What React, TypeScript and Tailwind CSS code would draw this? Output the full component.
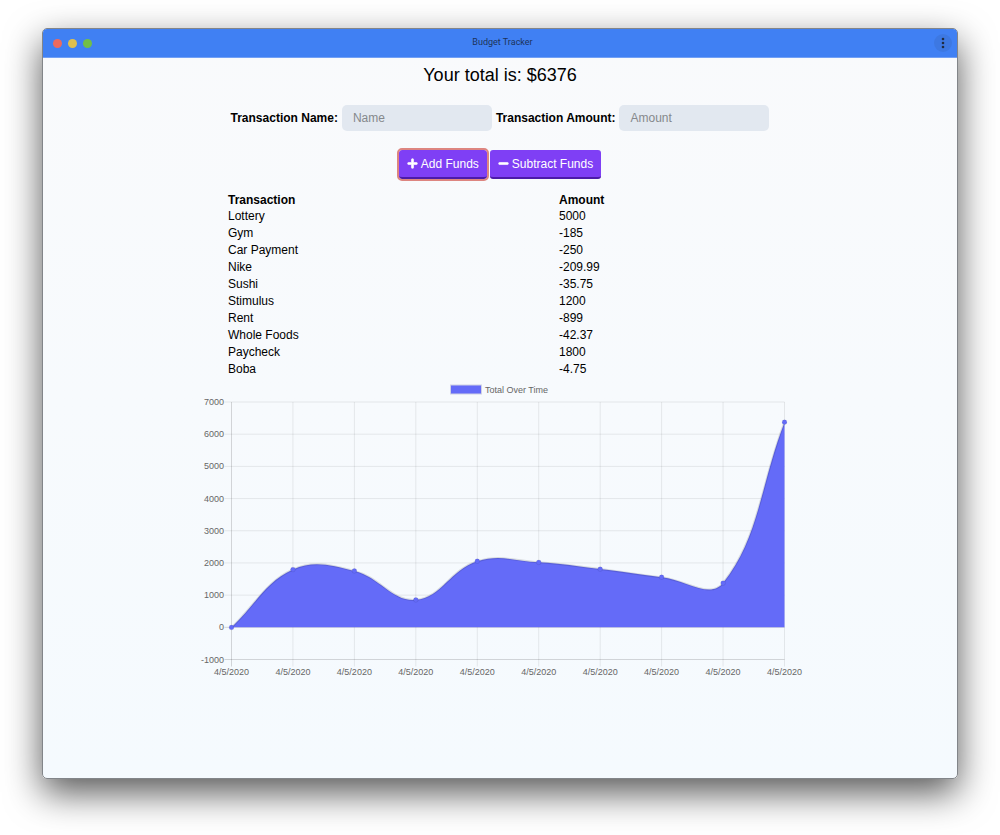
import React from "react";
import { FaPlus, FaMinus } from "react-icons/fa";

const transactions: [string, string][] = [
  ["Lottery", "5000"],
  ["Gym", "-185"],
  ["Car Payment", "-250"],
  ["Nike", "-209.99"],
  ["Sushi", "-35.75"],
  ["Stimulus", "1200"],
  ["Rent", "-899"],
  ["Whole Foods", "-42.37"],
  ["Paycheck", "1800"],
  ["Boba", "-4.75"],
];

const totals = [-4.75, 1795.25, 1752.88, 853.88, 2053.88, 2018.13, 1808.14, 1558.14, 1373.14, 6373.14];
const ticks = [7000, 6000, 5000, 4000, 3000, 2000, 1000, 0, -1000];

const LEFT = 35.5;
const RIGHT = 588.5;
const TOP = 20;
const BOTTOM = 277.5;
const xAt = (i: number) => LEFT + (i * (RIGHT - LEFT)) / (totals.length - 1);
const yAt = (v: number) => TOP + ((7000 - v) * (BOTTOM - TOP)) / 8000;

type Point = { x: number; y: number };

// Cubic spline through the points, with control handles scaled by distance.
function splinePath(points: Point[], tension = 0.4) {
  const dist = (a: Point, b: Point) => Math.hypot(b.x - a.x, b.y - a.y);
  const handles = points.map((p, i) => {
    const prev = points[i - 1] ?? p;
    const next = points[i + 1] ?? p;
    const before = dist(prev, p);
    const after = dist(p, next);
    const a = (tension * before) / (before + after);
    const b = (tension * after) / (before + after);
    return {
      inX: p.x - a * (next.x - prev.x),
      inY: p.y - a * (next.y - prev.y),
      outX: p.x + b * (next.x - prev.x),
      outY: p.y + b * (next.y - prev.y),
    };
  });
  return points
    .map((p, i) =>
      i === 0
        ? `M${p.x} ${p.y}`
        : `C${handles[i - 1].outX} ${handles[i - 1].outY} ${handles[i].inX} ${handles[i].inY} ${p.x} ${p.y}`
    )
    .join(" ");
}

function TotalChart() {
  const points = totals.map((v, i) => ({ x: xAt(i), y: yAt(v) }));
  const line = splinePath(points);
  return (
    <svg viewBox="0 0 608 304" className="block w-full text-[9px]" role="img" aria-label="Total Over Time">
      <rect x="254.5" y="3" width="31" height="9" fill="#646bf8" stroke="#d0d2e3" strokeWidth="1" />
      <text x="289" y="11" fill="#666">Total Over Time</text>
      {ticks.map((t) => (
        <g key={t}>
          <line x1={LEFT - 7} x2={RIGHT} y1={yAt(t)} y2={yAt(t)} stroke="#000" strokeOpacity={t === 0 || t === -1000 ? 0.15 : 0.08} />
          <text x="28" y={yAt(t) + 3} textAnchor="end" fill="#666">{t}</text>
        </g>
      ))}
      {points.map((p, i) => (
        <g key={i}>
          <line x1={p.x} x2={p.x} y1={TOP} y2={BOTTOM + 7} stroke="#000" strokeOpacity={i === 0 ? 0.15 : 0.08} />
          <text x={p.x} y="293" textAnchor="middle" fill="#666">4/5/2020</text>
        </g>
      ))}
      <path d={`${line} L${RIGHT} ${yAt(0)} L${LEFT} ${yAt(0)} Z`} fill="#646bf8" />
      <path d={line} fill="none" stroke="#000" strokeOpacity="0.12" strokeWidth="2" />
      {points.map((p, i) => (
        <circle key={i} cx={p.x} cy={p.y} r="2.4" fill="#646bf8" stroke="#000" strokeOpacity="0.1" strokeWidth="0.7" />
      ))}
    </svg>
  );
}

const field = "h-[26px] w-[150px] rounded-[5px] bg-[#e2e8f0] px-[11px] text-[12px] text-black outline-none placeholder:text-[#85888c]";
const button =
  "flex h-[29px] items-center gap-[3px] rounded-[3px] border-b-2 border-[#4c1ba8] bg-[#7f3ff5] px-2 text-[12px] text-white";

export default function App() {
  return (
    <div className="flex min-h-screen bg-white px-[42px] pt-7 pb-14 font-['Liberation_Sans',Arial,sans-serif] text-black">
      <div className="flex flex-1 flex-col overflow-hidden rounded-[5px] border border-[#828589] bg-linear-to-b from-[#f9fafc] to-[#f5fafe] shadow-[0_14px_36px_rgba(0,0,0,0.66)]">
        <header className="grid h-[29px] grid-cols-[1fr_auto_1fr] items-center border-b border-[#72a0f5] bg-[#4080f3] pr-[5px] pl-[10px]">
          <div className="flex gap-[6px]">
            <span className="size-[9px] rounded-full bg-[#ed6a5e]" />
            <span className="size-[9px] rounded-full bg-[#e0bf4d]" />
            <span className="size-[9px] rounded-full bg-[#72bf47]" />
          </div>
          <span className="font-[Roboto,sans-serif] text-[9px] text-[#1d3359]">Budget Tracker</span>
          <button aria-label="More" className="flex size-[18px] items-center justify-center justify-self-end rounded-full bg-[#3d78e2]">
            <svg viewBox="0 0 12 12" className="size-3" fill="#202c42">
              <circle cx="6" cy="2" r="1.3" />
              <circle cx="6" cy="6" r="1.3" />
              <circle cx="6" cy="10" r="1.3" />
            </svg>
          </button>
        </header>

        <main className="mx-auto flex w-full max-w-[608px] flex-col">
          <h1 className="pt-[5px] text-center text-[18px] leading-6">Your total is: $6376</h1>

          <form onSubmit={(e) => e.preventDefault()}>
            <div className="mt-[18px] flex flex-wrap items-center justify-center gap-1 text-[12px]">
              <label htmlFor="t-name" className="font-bold">Transaction Name:</label>
              <input id="t-name" type="text" placeholder="Name" className={field} />
              <label htmlFor="t-amount" className="font-bold">Transaction Amount:</label>
              <input id="t-amount" type="text" placeholder="Amount" className={field} />
            </div>
            <div className="mt-[19px] flex justify-center gap-[3px]">
              <button type="button" className={`${button} outline-2 outline-[#dd8580]`}>
                <FaPlus className="size-[11px] stroke-white stroke-[30px]" aria-hidden="true" />
                Add Funds
              </button>
              <button type="button" className={button}>
                <FaMinus className="size-[11px] stroke-white stroke-[30px]" aria-hidden="true" />
                Subtract Funds
              </button>
            </div>
          </form>

          <div className="mt-[13px] px-8">
            <table className="h-[185px] w-full table-fixed text-left text-[12px] leading-4">
              <thead>
                <tr>
                  <th className="w-[331px] p-0 font-bold">Transaction</th>
                  <th className="p-0 font-bold">Amount</th>
                </tr>
              </thead>
              <tbody>
                {transactions.map(([name, amount]) => (
                  <tr key={name}>
                    <td className="p-0">{name}</td>
                    <td className="p-0">{amount}</td>
                  </tr>
                ))}
              </tbody>
            </table>
          </div>

          <div className="mt-[5px]">
            <TotalChart />
          </div>
        </main>
      </div>
    </div>
  );
}
